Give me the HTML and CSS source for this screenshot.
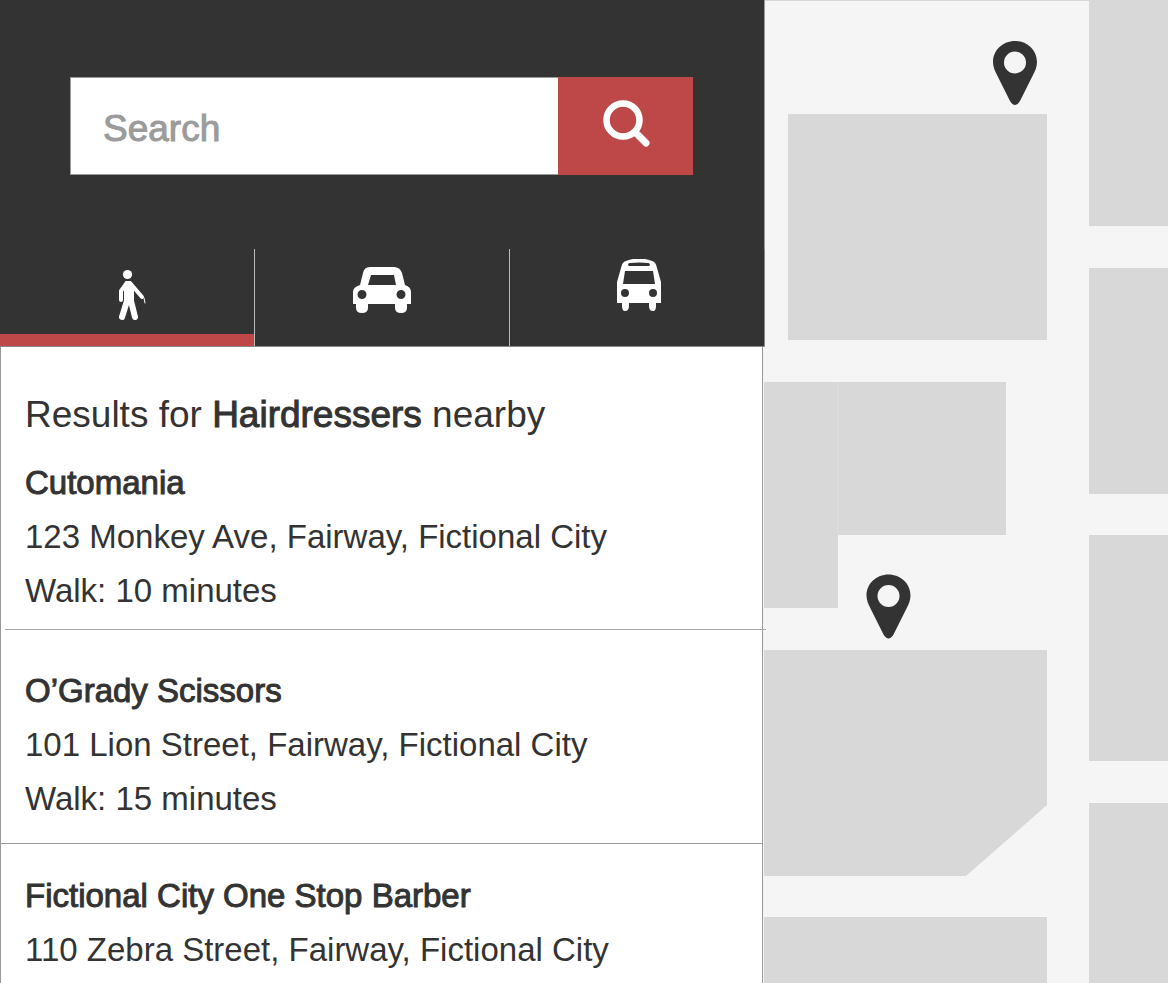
FILE: index.html
```html
<!DOCTYPE html>
<html lang="en">
<head>
<meta charset="utf-8">
<meta name="viewport" content="width=device-width, initial-scale=1">
<title>Nearby results</title>
<link rel="stylesheet" href="styles.css">
</head>
<body>
<div class="app">
  <div class="panel">
    <header class="header">
      <form class="search" role="search">
        <input class="search-input" type="search" placeholder="Search" aria-label="Search">
        <button class="search-button" type="submit" aria-label="Search">
          <svg class="icon-search" viewBox="0 0 50 50" aria-hidden="true"><circle cx="22" cy="22" r="16.5" fill="none" stroke="currentColor" stroke-width="6.5"/><path d="M34 34 45 45" stroke="currentColor" stroke-width="7" stroke-linecap="round"/></svg>
        </button>
      </form>
    </header>
    <nav class="tabs" aria-label="Travel mode">
      <button class="tab tab-active" type="button" aria-label="Walk">
        <svg class="icon-walk" viewBox="0 0 30 54" fill="none" stroke="currentColor" stroke-linecap="round" stroke-linejoin="round" aria-hidden="true"><circle cx="12.5" cy="5.5" r="4.6" fill="currentColor" stroke="none"/><path d="M11 13h4l3 4v15h-8V17Z" fill="currentColor" stroke-width="2"/><path d="M11 15 6 22v9" stroke-width="4"/><path d="M15 14 27 28" stroke-width="4"/><path d="M29 29 30 34" stroke-width="1"/><path d="M12 32 7 48" stroke-width="6"/><path d="M16 32 20 48" stroke-width="6"/></svg>
      </button>
      <button class="tab" type="button" aria-label="Drive">
        <svg class="icon-car" viewBox="0 0 60 48" aria-hidden="true"><path fill="currentColor" fill-rule="evenodd" d="M18 0H42Q48 0 50 6L53 18Q59 20 59 25V37H55V41Q55 46 49 46 43 46 43 41V37H16V41Q16 46 10 46 4 46 4 41V37H1V25Q1 20 8 18L11 6Q12 0 18 0ZM19 8 16 18H44L42 8ZM10 23a4.5 4.5 0 1 0 0 9 4.5 4.5 0 0 0 0-9Zm39 0a4.5 4.5 0 1 0 0 9 4.5 4.5 0 0 0 0-9Z"/></svg>
      </button>
      <button class="tab" type="button" aria-label="Bus">
        <svg class="icon-bus" viewBox="0 0 46 54" aria-hidden="true"><path fill="currentColor" fill-rule="evenodd" d="M10 2Q23-3 36 2 40 3 41 9L45 23V44H40V47Q40 52 37 52 33 52 33 47V44H13V47Q13 52 9 52 6 52 6 47V44H1V23L5 9Q6 3 10 2ZM14 4Q12 4 12 6 12 7 14 7H32Q34 7 34 6 34 4 32 4 23 3 14 4ZM9 12 7 25H39L37 12ZM9 30a4 4 0 1 0 0 8 4 4 0 0 0 0-8Zm28 0a4 4 0 1 0 0 8 4 4 0 0 0 0-8Z"/></svg>
      </button>
    </nav>
    <main class="results">
      <h1 class="results-title">Results for <strong>Hairdressers</strong> nearby</h1>
      <article class="result">
        <h2 class="result-name">Cutomania</h2>
        <p class="result-line">123 Monkey Ave, Fairway, Fictional City</p>
        <p class="result-line">Walk: 10 minutes</p>
      </article>
      <hr class="divider divider-wide">
      <article class="result result-second">
        <h2 class="result-name">O’Grady Scissors</h2>
        <p class="result-line">101 Lion Street, Fairway, Fictional City</p>
        <p class="result-line">Walk: 15 minutes</p>
      </article>
      <hr class="divider">
      <article class="result result-third">
        <h2 class="result-name">Fictional City One Stop Barber</h2>
        <p class="result-line">110 Zebra Street, Fairway, Fictional City</p>
      </article>
    </main>
  </div>
  <div class="map">
    <svg class="map-canvas" viewBox="764 0 404 983" preserveAspectRatio="xMinYMin slice" role="img" aria-label="Map">
      <path class="block" d="M764 0H1168V1H764ZM788 114H1047V340H788ZM1089 0H1168V226H1089ZM1089 268H1168V494H1089ZM1089 535H1168V761H1089ZM1089 803H1168V983H1089ZM764 382H1006V535H838V608H764ZM764 650H1047V805L966 876H764ZM764 917H1047V983H764Z"/>
      <path class="seam" d="M838 382V535"/>
      <path class="pin" d="M1015 41C1003 41 993 50 993 62 993 67 995 71 997 75L1010 101Q1015 109 1020 101L1033 75C1035 71 1037 67 1037 62 1037 50 1027 41 1015 41ZM1015 51.500a11 11 0 1 1 0 22 11 11 0 0 1 0-22Z"/>
      <path class="pin" transform="translate(-126.500 533.500)" d="M1015 41C1003 41 993 50 993 62 993 67 995 71 997 75L1010 101Q1015 109 1020 101L1033 75C1035 71 1037 67 1037 62 1037 50 1027 41 1015 41ZM1015 51.500a11 11 0 1 1 0 22 11 11 0 0 1 0-22Z"/>
    </svg>
  </div>
</div>
</body>
</html>
```
FILE: styles.css
```css
* {
  box-sizing: border-box;
}

body {
  margin: 0;
  font-family: "Liberation Sans", Arial, sans-serif;
  color: #333;
  background: #f5f5f5;
}

.app {
  display: grid;
  grid-template-columns: 191fr 101fr;
  grid-template-rows: 100%;
  height: 100vh;
  overflow: hidden;
}

.panel {
  display: flex;
  flex-direction: column;
  min-width: 0;
  position: relative;
  z-index: 1;
}

.header {
  padding: 77px 71px 74px 70px;
  background: #333;
  box-shadow: 1px 0 #999;
}

.search {
  display: flex;
  height: 98px;
}

.search-input {
  flex: 1;
  min-width: 0;
  padding: 5px 32px 0;
  border: 1px solid #999;
  border-right: 0;
  border-radius: 0;
  background: #fff;
  color: #333;
  font: 37px "Liberation Sans", Arial, sans-serif;
  appearance: none;
}

.search-input::placeholder {
  color: #9b9b9b;
  -webkit-text-stroke: 1px #9b9b9b;
}

.search-button {
  display: flex;
  align-items: center;
  justify-content: center;
  width: 135px;
  padding: 0 0 6px;
  border: 0;
  background: #be4848;
  color: #fff;
}

.icon-search {
  width: 50px;
  height: 50px;
}

.tabs {
  display: grid;
  grid-template-columns: repeat(3, 1fr);
  height: 98px;
  margin-right: -1px;
  background: #333;
  border-bottom: 1px solid #888;
}

.tab {
  display: flex;
  justify-content: center;
  align-items: flex-start;
  padding: 0;
  border: 0;
  border-right: 1px solid #bbb;
  background: #333;
  color: #fff;
}

.tab:last-child {
  border-color: #888;
}

.tab-active {
  box-shadow: inset 0 -12px #be4848;
}

.icon-walk {
  width: 30px;
  height: 54px;
  margin: 20px 0 0 6px;
  overflow: visible;
}

.icon-car {
  width: 60px;
  height: 48px;
  margin-top: 18px;
}

.icon-bus {
  width: 46px;
  height: 54px;
  margin: 10px 0 0 3px;
}

.results {
  flex: 1;
  min-height: 0;
  margin-right: 1px;
  padding-top: 41px;
  border: solid #999;
  border-width: 0 1px;
  background: #fff;
}

.results-title,
.result-name,
.result-line {
  margin: 0;
  font-weight: 400;
  line-height: 54px;
  white-space: nowrap;
}

.results-title {
  padding: 0 24px;
  margin-bottom: 14px;
  font-size: 37px;
}

.results-title strong {
  font-weight: 400;
  -webkit-text-stroke: 1px #333;
}

.result {
  padding: 0 24px 11px;
  font-size: 33px;
}

.result-second {
  padding-top: 34px;
  padding-bottom: 17px;
}

.result-third {
  padding-top: 25px;
}

.result-name {
  font-size: 33px;
  -webkit-text-stroke: 1px #333;
}

.divider {
  height: 1px;
  margin: 0;
  border: 0;
  background: #999;
}

.divider-wide {
  margin: 0 -4px 0 4px;
  background: #aaa;
}

.map {
  min-width: 0;
  background: #f5f5f5;
}

.map-canvas {
  display: block;
  width: 100%;
  height: 100%;
}

.block {
  fill: #d8d8d8;
}

.seam {
  stroke: #dfdfdf;
}

.pin {
  fill: #333;
  fill-rule: evenodd;
}
```
